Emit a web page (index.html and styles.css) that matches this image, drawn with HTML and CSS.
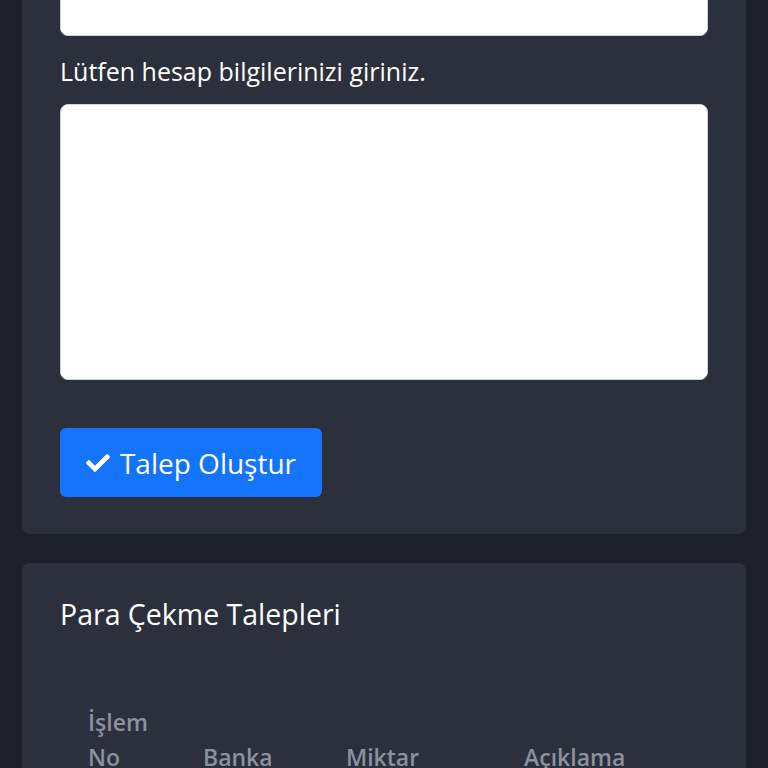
FILE: index.html
```html
<!DOCTYPE html>
<html lang="tr">
<head>
<meta charset="utf-8">
<link rel="stylesheet" href="styles.css">
</head>
<body>
<div class="page">
  <section class="card card-form">
    <div class="input-box"></div>
    <label class="label">Lütfen hesap bilgilerinizi giriniz.</label>
    <div class="textarea-box"></div>
    <button class="btn">
      <svg class="check" viewBox="0 0 512 512" width="24" height="24"><path fill="#fff" d="M173.9 439.4l-166.4-166.4c-10-10-10-26.2 0-36.2l36.2-36.2c10-10 26.2-10 36.2 0L192 312.7 432.1 72.6c10-10 26.2-10 36.2 0l36.2 36.2c10 10 10 26.2 0 36.2L210.1 439.4c-10 10-26.2 10-36.2 0z"/></svg>
      <span>Talep Oluştur</span>
    </button>
  </section>
  <section class="card card-list">
    <h2 class="title">Para Çekme Talepleri</h2>
    <div class="thead">
      <div class="th th-no">İşlem<br>No</div>
      <div class="th">Banka</div>
      <div class="th">Miktar</div>
      <div class="th">Açıklama</div>
    </div>
  </section>
</div>
</body>
</html>
```

FILE: styles.css
```css
html, body {
  margin: 0;
  padding: 0;
  background: #1e212b;
  font-family: "Open Sans", "Noto Sans", sans-serif;
  color: #ffffff;
  overflow: hidden;
  height: 768px;
}
.page {
  padding: 0 22px;
  display: flex;
  flex-direction: column;
  gap: 29px;
}
.card {
  background: #2c303c;
  border-radius: 8px;
  padding: 0 38px;
}
.card-form {
  margin-top: -100px;
  padding-top: 60px;
  padding-bottom: 37px;
  display: flex;
  flex-direction: column;
  align-items: flex-start;
}
.input-box {
  width: 646px;
  height: 74px;
  background: #fff;
  border: 1px solid #ced4da;
  border-radius: 8px;
}
.label {
  margin-top: 18px;
  font-size: 25px;
  line-height: 34px;
  color: #fff;
}
.textarea-box {
  margin-top: 16px;
  width: 646px;
  height: 274px;
  background: #fff;
  border: 1px solid #ced4da;
  border-radius: 8px;
}
.btn {
  margin-top: 48px;
  width: 262px;
  height: 69px;
  background: #1474fb;
  border: none;
  border-radius: 6px;
  color: #fff;
  font-family: inherit;
  font-size: 28px;
  display: flex;
  align-items: center;
  justify-content: center;
  gap: 10px;
  padding: 0;
}
.check { flex: none; }
.card-list {
  padding-top: 30px;
  min-height: 400px;
}
.title {
  margin: 0;
  font-weight: 400;
  font-size: 28.5px;
  line-height: 42px;
}
.thead {
  margin-top: 70px;
  display: grid;
  grid-template-columns: 115px 143px 178px 1fr;
  padding-left: 28px;
}
.th {
  color: #8b919e;
  font-size: 23px;
  font-weight: 600;
  line-height: 35px;
  align-self: end;
}
```
